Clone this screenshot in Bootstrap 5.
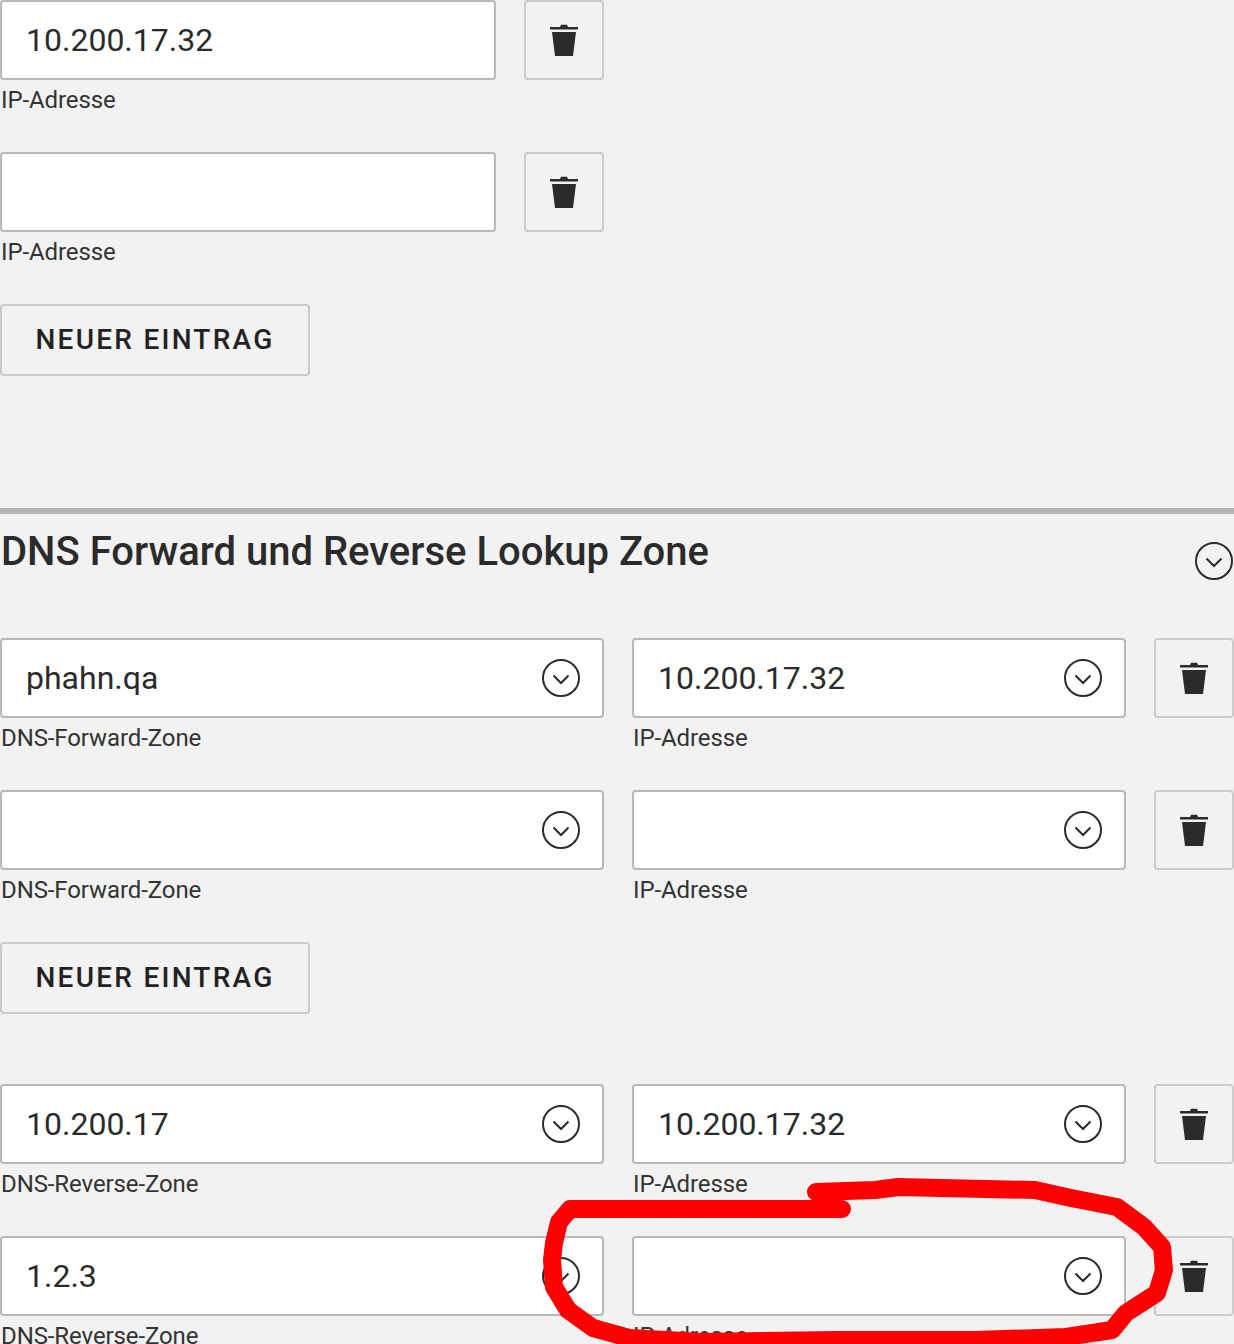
<!doctype html>
<html lang="de"><head><meta charset="utf-8"><title>DNS</title>
<link href="https://cdn.jsdelivr.net/npm/bootstrap@5.3.0/dist/css/bootstrap.min.css" rel="stylesheet">
<style>
html,body{height:1344px;overflow:hidden}
body{background:#f2f2f2;color:#2b2b2b;font-family:Roboto,"Liberation Sans",sans-serif;position:relative}
.fld-row{display:flex;gap:28px;height:152px}
.fld{flex:none;width:604px}
.fld.ipf{width:494px}
.fld.ipf.first{width:496px}
.inp-wrap{position:relative;height:80px}
.form-control.inp{height:80px;border:2px solid #b8b8b8;border-radius:4px;font-size:32px;color:#2b2b2b;padding:0 24px;background:#fff;line-height:76px;font-family:inherit}
.chev-ab{position:absolute;right:24px;top:21px}
.fld-lab{font-size:24px;line-height:40px;margin:0;margin-left:1px;letter-spacing:-.1px;color:#333}
.btn.del{width:80px;height:80px;padding:0;border:2px solid #cbcbcb;border-radius:4px;background:#f2f2f2;display:flex;align-items:center;justify-content:center;flex:none}
.btn.addn{width:310px;height:72px;padding:0;border:2px solid #cbcbcb;border-radius:4px;background:#f2f2f2;color:#222;font-size:28px;font-weight:500;letter-spacing:2.25px;display:block}
.sec-one{height:508px}
.sec-rule{height:6px;background:#b5b5b5}
.sec-head{height:124px;padding-top:14px;align-items:flex-start}
.sec-head h2{font-size:40px;font-weight:500;line-height:48px;margin:0 0 0 1px;color:#2b2b2b}
.sec-head svg{margin-top:14px;margin-right:1px}
.gap-after{height:70px}
.scribble{position:absolute;left:0;top:0;pointer-events:none}
</style></head>
<body>
<svg width="0" height="0" class="position-absolute"><defs>
<symbol id="trash" viewBox="0 0 28 32"><path fill="#2b2b2b" d="M0 3h10l1-2.2h6L18 3h10v2.6H0zM2 8h24l-3 24H5z"/></symbol>
<symbol id="chev" viewBox="0 0 38 38"><circle cx="19" cy="19" r="18" fill="none" stroke="#2b2b2b" stroke-width="2"/><path d="M11.500 16.500 19 24l7.500-7.500" fill="none" stroke="#2b2b2b" stroke-width="2"/></symbol>
</defs></svg>

<div class="sec-one">
  <div class="fld-row">
    <div class="fld ipf first"><div class="inp-wrap"><input class="form-control inp" value="10.200.17.32" aria-label="IP-Adresse"></div><p class="fld-lab">IP-Adresse</p></div>
    <button class="btn del" aria-label="Löschen"><svg width="28" height="32"><use href="#trash"/></svg></button>
  </div>
  <div class="fld-row">
    <div class="fld ipf first"><div class="inp-wrap"><input class="form-control inp" aria-label="IP-Adresse"></div><p class="fld-lab">IP-Adresse</p></div>
    <button class="btn del" aria-label="Löschen"><svg width="28" height="32"><use href="#trash"/></svg></button>
  </div>
  <button class="btn addn">NEUER EINTRAG</button>
</div>
<div class="sec-rule"></div>
<div class="sec-head d-flex justify-content-between">
  <h2>DNS Forward und Reverse Lookup Zone</h2>
  <svg width="38" height="38"><use href="#chev"/></svg>
</div>

<div class="fld-row">
  <div class="fld"><div class="inp-wrap"><input class="form-control inp" value="phahn.qa" aria-label="DNS-Forward-Zone"><svg class="chev-ab" width="38" height="38"><use href="#chev"/></svg></div><p class="fld-lab">DNS-Forward-Zone</p></div>
  <div class="fld ipf"><div class="inp-wrap"><input class="form-control inp" value="10.200.17.32" aria-label="IP-Adresse"><svg class="chev-ab" width="38" height="38"><use href="#chev"/></svg></div><p class="fld-lab">IP-Adresse</p></div>
  <button class="btn del" aria-label="Löschen"><svg width="28" height="32"><use href="#trash"/></svg></button>
</div>
<div class="fld-row">
  <div class="fld"><div class="inp-wrap"><input class="form-control inp" aria-label="DNS-Forward-Zone"><svg class="chev-ab" width="38" height="38"><use href="#chev"/></svg></div><p class="fld-lab">DNS-Forward-Zone</p></div>
  <div class="fld ipf"><div class="inp-wrap"><input class="form-control inp" aria-label="IP-Adresse"><svg class="chev-ab" width="38" height="38"><use href="#chev"/></svg></div><p class="fld-lab">IP-Adresse</p></div>
  <button class="btn del" aria-label="Löschen"><svg width="28" height="32"><use href="#trash"/></svg></button>
</div>
<button class="btn addn">NEUER EINTRAG</button>
<div class="gap-after"></div>
<div class="fld-row">
  <div class="fld"><div class="inp-wrap"><input class="form-control inp" value="10.200.17" aria-label="DNS-Reverse-Zone"><svg class="chev-ab" width="38" height="38"><use href="#chev"/></svg></div><p class="fld-lab">DNS-Reverse-Zone</p></div>
  <div class="fld ipf"><div class="inp-wrap"><input class="form-control inp" value="10.200.17.32" aria-label="IP-Adresse"><svg class="chev-ab" width="38" height="38"><use href="#chev"/></svg></div><p class="fld-lab">IP-Adresse</p></div>
  <button class="btn del" aria-label="Löschen"><svg width="28" height="32"><use href="#trash"/></svg></button>
</div>
<div class="fld-row">
  <div class="fld"><div class="inp-wrap"><input class="form-control inp" value="1.2.3" aria-label="DNS-Reverse-Zone"><svg class="chev-ab" width="38" height="38"><use href="#chev"/></svg></div><p class="fld-lab">DNS-Reverse-Zone</p></div>
  <div class="fld ipf"><div class="inp-wrap"><input class="form-control inp" aria-label="IP-Adresse"><svg class="chev-ab" width="38" height="38"><use href="#chev"/></svg></div><p class="fld-lab">IP-Adresse</p></div>
  <button class="btn del" aria-label="Löschen"><svg width="28" height="32"><use href="#trash"/></svg></button>
</div>

<svg class="scribble" width="1234" height="1344" aria-hidden="true"><path fill="none" stroke="#ff0000" stroke-width="18" stroke-linecap="round" stroke-linejoin="round" d="M842 1209H570L559 1222L554 1243L552 1260L554 1287L568 1310L593 1328L629 1338L702 1342L839 1340L975 1340L1066 1337L1112 1330L1126 1313L1157 1293L1164 1270L1162 1247L1144 1227L1117 1207L1071 1198L1035 1190L898 1187L875 1190L816 1192"/></svg>
<script src="https://cdn.jsdelivr.net/npm/bootstrap@5.3.0/dist/js/bootstrap.bundle.min.js"></script>
</body></html>
